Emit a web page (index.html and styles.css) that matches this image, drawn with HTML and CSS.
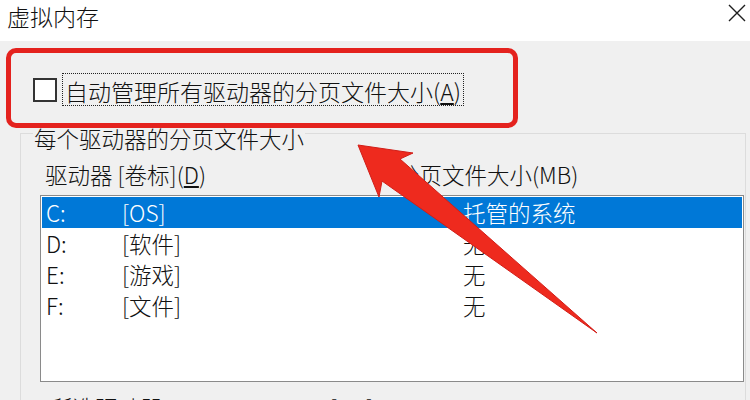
FILE: index.html
```html
<!DOCTYPE html>
<html lang="zh-CN">
<head>
<meta charset="utf-8">
<title>虚拟内存</title>
<link rel="stylesheet" href="styles.css">
</head>
<body>
<div class="window">
  <header class="titlebar">
    <span class="title">虚拟内存</span>
    <svg class="close" viewBox="0 0 18 18" width="18" height="18" aria-label="关闭">
      <path d="M1 1 L17 17 M17 1 L1 17" stroke="#1e1e1e" stroke-width="1.4" fill="none"/>
    </svg>
  </header>
  <div class="content">
    <div class="auto-row">
      <span class="checkbox"></span>
      <span class="auto-label">自动管理所有驱动器的分页文件大小(<u>A</u>)</span>
    </div>
    <section class="group">
      <div class="group-title">每个驱动器的分页文件大小</div>
      <div class="list-head">
        <span>驱动器 [卷标](<u>D</u>)</span>
        <span>分页文件大小(MB)</span>
      </div>
      <div class="list">
        <div class="row selected"><span>C:</span><span>[OS]</span><span>托管的系统</span></div>
        <div class="row"><span>D:</span><span>[软件]</span><span>无</span></div>
        <div class="row"><span>E:</span><span>[游戏]</span><span>无</span></div>
        <div class="row"><span>F:</span><span>[文件]</span><span>无</span></div>
      </div>
      <div class="selected-info">
        <span>所选驱动器:</span>
        <span>C:&nbsp;&nbsp;[OS]</span>
      </div>
    </section>
  </div>
  <div class="annot-box"></div>
  <svg class="annot-arrow" viewBox="0 0 750 400" width="750" height="400">
    <polygon points="358,145 413,153 400,159 597,333 382,181 379,197" fill="#ee2a1e" stroke="#d11d17" stroke-width="1" stroke-linejoin="round"/>
  </svg>
</div>
</body>
</html>
```

FILE: styles.css
```css
* { box-sizing: border-box; }
html, body {
  margin: 0;
  padding: 0;
}
body {
  width: 750px;
  height: 400px;
  overflow: hidden;
  background: #f0f0f0;
  font-family: "Noto Sans CJK SC", "Noto Sans", sans-serif;
  font-weight: 300;
  color: #111;
}
.window {
  position: relative;
  width: 750px;
  height: 400px;
  overflow: hidden;
  background: #f0f0f0;
}
.titlebar {
  display: flex;
  align-items: flex-start;
  height: 41px;
  background: #ffffff;
  padding-left: 7px;
  padding-top: 1px;
}
.title {
  font-size: 23px;
  line-height: 30px;
}
.close {
  margin-left: auto;
  margin-top: 3px;
  margin-right: 4px;
  width: 18px;
  height: 18px;
}
.content {
  padding-top: 32px;
}
.auto-row {
  display: flex;
  align-items: flex-start;
  height: 34px;
  padding-left: 33px;
}
.checkbox {
  width: 24px;
  height: 24px;
  margin-top: 5px;
  border: 2px solid #333;
  background: #fff;
  flex: none;
}
.auto-label {
  margin-left: 5px;
  border: 1px dotted #222;
  padding: 3px 2px 0 2px;
  height: 33px;
  font-size: 23px;
  line-height: 28px;
  white-space: nowrap;
}
.group {
  margin: 26px 4px 0 20px;
  border: 1px solid #dcdcdc;
  border-bottom: none;
  height: 400px;
}
.group-title {
  width: fit-content;
  margin: -8px 0 0 12px;
  padding: 0 1px;
  background: #f0f0f0;
  font-size: 22.5px;
  line-height: 24px;
  white-space: nowrap;
}
.list-head {
  display: grid;
  grid-template-columns: 352px 1fr;
  margin-top: 12px;
  padding-left: 24px;
  font-size: 22.5px;
  line-height: 24px;
  white-space: nowrap;
}
.list {
  margin: 9px 1px 0 19px;
  height: 187px;
  border: 1px solid #8a8a8a;
  background: #fff;
  padding: 1px;
}
.row {
  display: grid;
  grid-template-columns: 76px 341px 1fr;
  height: 31px;
  line-height: 31px;
  padding-left: 4px;
  font-size: 22.5px;
  white-space: nowrap;
}
.row.selected {
  background: #0078d7;
  color: #fff;
}
.selected-info {
  display: grid;
  grid-template-columns: 250px 1fr;
  margin-top: 13px;
  padding-left: 29px;
  font-size: 22.5px;
  line-height: 24px;
  white-space: nowrap;
}
.annot-box {
  position: absolute;
  left: 6px;
  top: 48px;
  width: 512px;
  height: 80px;
  border: 5px solid #e4221e;
  border-radius: 10px;
}
.annot-arrow {
  position: absolute;
  left: 0;
  top: 0;
  pointer-events: none;
}
```
